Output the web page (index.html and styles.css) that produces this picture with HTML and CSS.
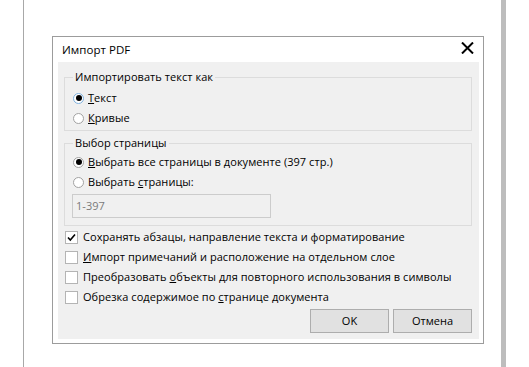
FILE: index.html
```html
<!DOCTYPE html>
<html lang="ru">
<head>
    <meta charset="UTF-8">
    <title>Импорт PDF</title>
    <link rel="stylesheet" href="styles.css">
</head>
<body>

    <div class="frame">
        <div class="dialog">
            <div class="title-bar">
                <span class="title">Импорт PDF</span>
                <svg class="close" width="13" height="12" viewBox="0 0 13 12">
                    <path d="M1 0.5 L12 11.5 M12 0.5 L1 11.5" stroke="#000" stroke-width="2" fill="none"/>
                </svg>
            </div>

            <div class="dialog-body">
                <fieldset class="group">
                    <legend>Импортировать текст как</legend>
                    <label class="option"><span class="radio on focus"></span><span><u>Т</u>екст</span></label>
                    <label class="option"><span class="radio"></span><span><u>К</u>ривые</span></label>
                </fieldset>

                <fieldset class="group group-pages">
                    <legend>Выбор страницы</legend>
                    <label class="option"><span class="radio on"></span><span><u>В</u>ыбрать все страницы в документе (397 стр.)</span></label>
                    <label class="option"><span class="radio"></span><span>Выбрать <u>с</u>траницы:</span></label>
                    <div class="pages-input">1-397</div>
                </fieldset>

                <div class="checks">
                    <label class="check-row">
                        <span class="checkbox">
                            <svg width="11" height="11" viewBox="0 0 11 11"><path d="M2 5.5 L4.3 8 L9 2.5" stroke="#000" stroke-width="1.6" fill="none"/></svg>
                        </span>
                        <span>Сохранять абзацы, направление текста и форматирование</span>
                    </label>
                    <label class="check-row"><span class="checkbox"></span><span><u>И</u>мпорт примечаний и расположение на отдельном слое</span></label>
                    <label class="check-row"><span class="checkbox"></span><span>Преобразовать <u>о</u>бъекты для повторного использования в символы</span></label>
                    <label class="check-row"><span class="checkbox"></span><span>Обрезка содержимое по <u>с</u>транице документа</span></label>
                </div>

                <div class="actions">
                    <button class="btn">OK</button>
                    <button class="btn">Отмена</button>
                </div>
            </div>
        </div>
    </div>

</body>
</html>
```

FILE: styles.css
```css
* {
    box-sizing: border-box;
}

body {
    margin: 0;
    background: #fff;
    font-family: "Open Sans", "Noto Sans", sans-serif;
    font-size: 11px;
    line-height: 16px;
    letter-spacing: 0.05px;
    color: #000;
    white-space: nowrap;
    overflow: hidden;
}

/*--------------------
Frame (page behind)
--------------------*/
.frame {
    margin-left: 23px;
    width: 483px;
    height: 367px;
    border-left: 1px solid #a8a8a8;
    border-right: 5px solid #bdbdbd;
    padding: 36px 0 0 28px;
}

/*--------------------
Dialog
--------------------*/
.dialog {
    width: 432px;
    height: 308px;
    background: #fff;
    border: 1px solid #9c9c9c;
}

.title-bar {
    height: 25px;
    display: flex;
    align-items: center;
    justify-content: space-between;
    padding: 0 9px;
}

.title {
    font-size: 11.5px;
}

.close {
    margin-top: -4px;
}

.dialog-body {
    background: #f0f0f0;
    margin: 0 4px 0 5px;
    padding: 7px 7px 6px 6px;
}

/*--------------------
Groups
--------------------*/
.group {
    margin: 0;
    padding: 3px 0 2px 8px;
    border: 1px solid #dcdcdc;
    min-width: 0;
}

.group legend {
    padding: 0 2px;
}

.group-pages {
    margin-top: 4px;
    padding-top: 1px;
    padding-bottom: 7px;
}

.option {
    display: flex;
    align-items: center;
    height: 20px;
}

.radio {
    width: 11px;
    height: 11px;
    border-radius: 50%;
    border: 1px solid #a2a2a2;
    background: #fff;
    margin-right: 4px;
    display: flex;
    align-items: center;
    justify-content: center;
}

.radio.on::after {
    content: "";
    width: 6px;
    height: 6px;
    border-radius: 50%;
    background: #000;
}

.radio.focus {
    border-color: #7fb2e0;
}

.pages-input {
    width: 199px;
    height: 24px;
    margin: 2px 0 0 -1px;
    border: 1px solid #cccccc;
    background: #f0f0f0;
    color: #7a7a7a;
    padding: 3px 0 0 3px;
}

/*--------------------
Checkboxes
--------------------*/
.checks {
    margin-top: 1px;
}

.check-row {
    display: flex;
    align-items: center;
    height: 20px;
}

.checkbox {
    width: 13px;
    height: 13px;
    border: 1px solid #b4b4b4;
    background: #fff;
    margin: 0 5px 0 1px;
    display: flex;
    align-items: center;
    justify-content: center;
}

/*--------------------
Buttons
--------------------*/
.actions {
    display: flex;
    justify-content: flex-end;
    gap: 4px;
    margin-top: 2px;
}

.btn {
    width: 79px;
    height: 24px;
    background: #e1e1e1;
    border: 1px solid #adadad;
    font: inherit;
    color: #000;
    padding: 0;
}
```
